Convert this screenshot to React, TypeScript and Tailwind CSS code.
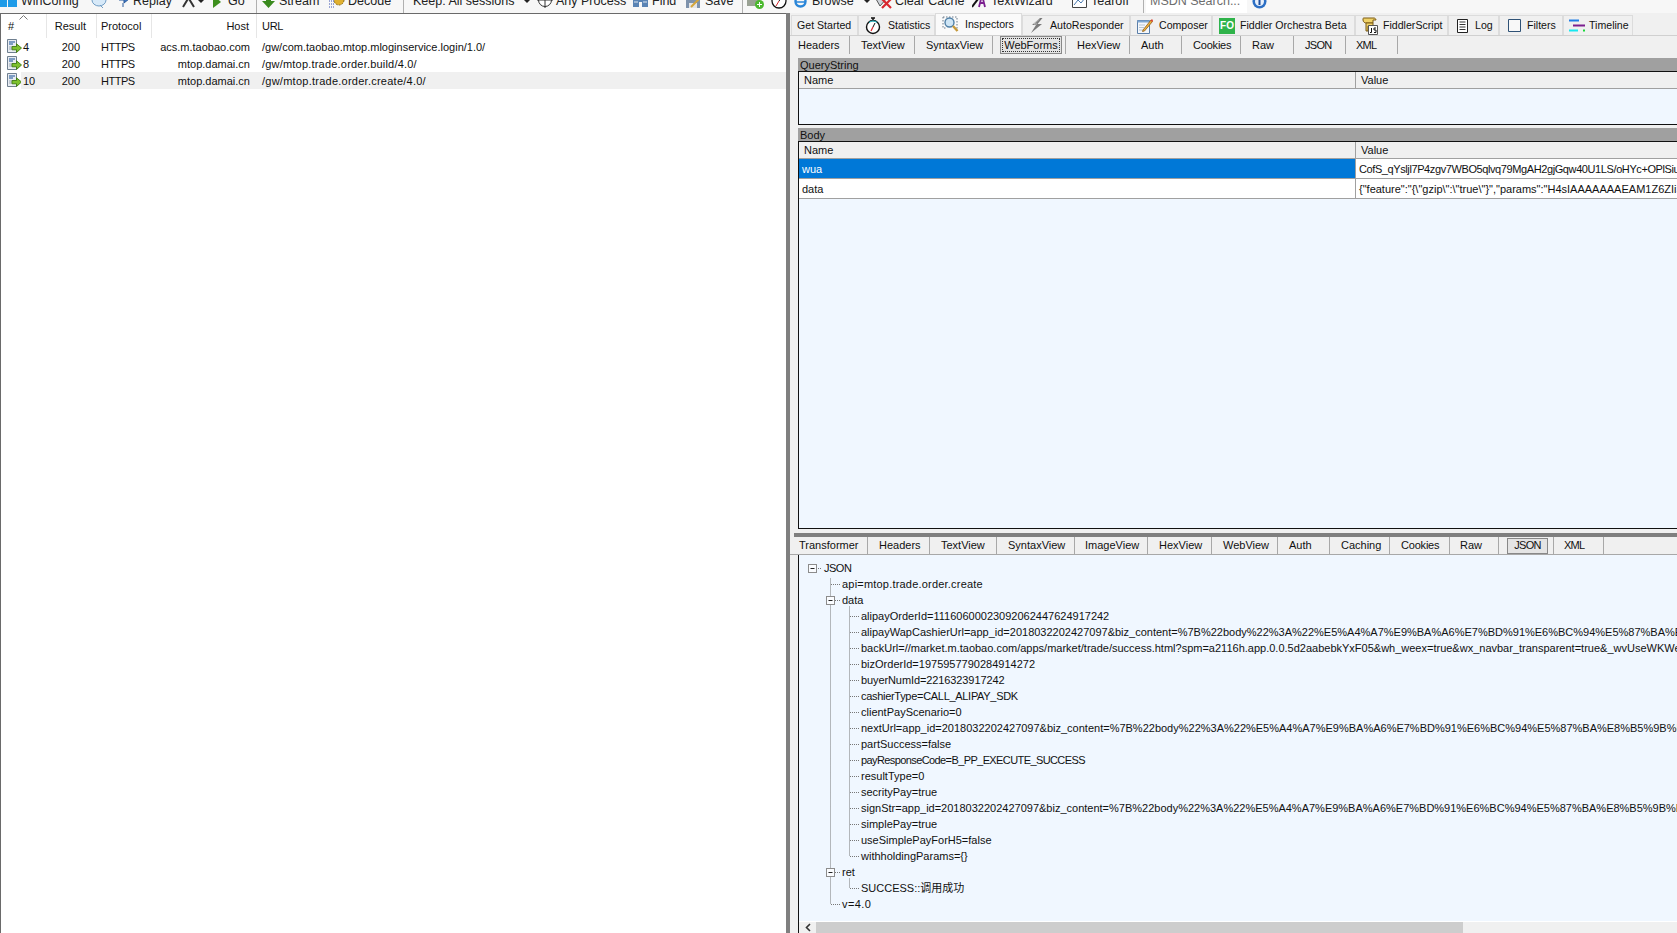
import React from "react";

const FONT = "[font-family:'Liberation_Sans','Noto_Sans_CJK_SC',sans-serif]";

function SessionIcon() {
  return (
    <svg width="15" height="15" viewBox="0 0 15 15" className="shrink-0">
      <path d="M0.5 0.5H9.5V13.5H0.5Z" fill="#e8ecf2" stroke="#6f7f8f" />
      <path d="M2 3H8M2 5H6" stroke="#5b83b5" strokeWidth="1.4" />
      <path d="M2 8H5M2 10H5" stroke="#9aa7b5" />
      <path d="M5 7.5H9.5V4.8L14.5 9L9.5 13.5V10.8H5Z" fill="#7ec22e" stroke="#3f7a12" strokeWidth="0.9" />
    </svg>
  );
}

function Stopwatch() {
  return (
    <svg width="16" height="18" viewBox="0 0 16 18">
      <path d="M6 1H10M8 1V3" stroke="#111" strokeWidth="1.4" />
      <circle cx="8" cy="10" r="6.5" fill="#fff" stroke="#111" strokeWidth="1.4" />
      <path d="M4 5.5A6 6 0 0 1 12 5.5" stroke="#28c8d8" fill="none" />
      <path d="M8 10L10 6" stroke="#111" />
      <path d="M8 10L6 14" stroke="#d8282f" strokeWidth="1.2" />
    </svg>
  );
}

function Magnifier() {
  return (
    <svg width="17" height="17" viewBox="0 0 17 17">
      <path d="M1 1H15V15" stroke="#6a7a8a" strokeDasharray="1.5 1.5" fill="none" />
      <path d="M1 1V12H5" stroke="#6a7a8a" strokeDasharray="1.5 1.5" fill="none" />
      <circle cx="7.5" cy="6.5" r="4.5" fill="#cfe6f6" stroke="#4f7fa6" strokeWidth="1.4" />
      <path d="M11 10L15.5 15" stroke="#c79a3a" strokeWidth="2.4" />
    </svg>
  );
}

function Bolt() {
  return (
    <svg width="13" height="15" viewBox="0 0 13 15">
      <path d="M10 0L2 7H6L1 15L12 6H7.5L12.5 0Z" fill="#7a7a7a" />
      <path d="M9.5 1L4 6H7" stroke="#bdbdbd" fill="none" />
    </svg>
  );
}

function ComposerIcon() {
  return (
    <svg width="16" height="16" viewBox="0 0 16 16">
      <path d="M0.5 2.5H12.5V15.5H0.5Z" fill="#f4f7fb" stroke="#5a7ea8" />
      <path d="M0.5 2.5H12.5V4.5H0.5Z" fill="#7ea7d2" />
      <path d="M2 7H8M2 9.5H7M2 12H6" stroke="#b7c4d2" />
      <path d="M6 12L14 2L15.5 3.5L7.5 13L5.5 13.5Z" fill="#f0b33a" stroke="#8a5a1a" strokeWidth="0.8" />
      <path d="M13.5 2.5L15 1L16 2.5L15 4Z" fill="#d8402f" />
    </svg>
  );
}

function ScriptIcon() {
  return (
    <svg width="16" height="18" viewBox="0 0 16 18">
      <path d="M2 1H12C13 1 14 2 14 3H11V6H4C3 6 1 5 1 3S1 1 2 1Z" fill="#f0d268" stroke="#7a5a14" />
      <path d="M4 6H11V9H6V14H4Z" fill="#f0d268" stroke="#7a5a14" />
      <path d="M6.5 8.5H15.5V17.5H6.5Z" fill="#fdfdfd" stroke="#555" />
      <path d="M9.5 11V15.5H8M14 11H12V13H14V15.5H12" stroke="#111" fill="none" />
    </svg>
  );
}

function LogIcon() {
  return (
    <svg width="11" height="14" viewBox="0 0 11 14">
      <path d="M0.5 0.5H10.5V13.5H0.5Z" fill="#fff" stroke="#222" />
      <path d="M2.5 3H8.5M2.5 5.5H8.5M2.5 8H8.5M2.5 10.5H8.5" stroke="#333" />
    </svg>
  );
}

function FilterBox() {
  return (
    <svg width="13" height="13" viewBox="0 0 13 13">
      <path d="M0.5 0.5H12.5V12.5H0.5Z" fill="#f8f8f8" stroke="#2f5276" />
    </svg>
  );
}

function TimelineIcon() {
  return (
    <svg width="17" height="13" viewBox="0 0 17 13">
      <path d="M0 1.5H10" stroke="#1e7ee6" strokeWidth="2" />
      <path d="M4 6.5H16" stroke="#7b1f8f" strokeWidth="2" />
      <path d="M0 11.5H9" stroke="#18e8f0" strokeWidth="2" />
      <path d="M14 11.5H16" stroke="#18d83a" strokeWidth="2" />
    </svg>
  );
}

const tool = "flex items-center shrink-0 whitespace-nowrap";

function Toolbar() {
  return (
    <div className="h-[13px] overflow-hidden bg-[#f7f7f7] shrink-0">
      <div className="-mt-[11px] h-6 flex items-center text-[12.5px] text-[#222]">
        <div className={tool}>
          <svg width="17" height="14" viewBox="0 0 17 14"><path d="M0 0H7V13H0ZM8 0H17V13H8Z" fill="#1e9be8" /></svg>
          <span className="ml-[4px] w-[59px]">WinConfig</span>
        </div>
        <svg width="16" height="16" viewBox="0 0 16 16" className="ml-[11px] shrink-0"><ellipse cx="8" cy="7" rx="7" ry="6" fill="#d7e9f8" stroke="#6f9cc4" /><path d="M9 12L12 15" stroke="#6f9cc4" /></svg>
        <svg width="13" height="14" viewBox="0 0 13 14" className="ml-[9px] shrink-0"><path d="M1 3H8V0L13 5L8 9V6H3M7 9V13" fill="#3f78c4" stroke="#2a5a9c" strokeWidth="1" /></svg>
        <span className={`${tool} ml-[4px] w-[38px]`}>Replay</span>
        <svg width="13" height="16" viewBox="0 0 13 16" className="ml-[11px] shrink-0"><path d="M1 14L6.5 5L12 14M3 3L6.5 5" stroke="#333" strokeWidth="2" fill="none" /></svg>
        <span className="ml-[3px] w-0 h-0 border-x-[3px] border-x-transparent border-t-[3px] border-t-[#222] shrink-0" />
        <svg width="8" height="16" viewBox="0 0 8 16" className="ml-[9px] shrink-0"><path d="M0 2L8 9L0 15Z" fill="#3d8f1e" /></svg>
        <span className={`${tool} ml-[7px] w-[17px]`}>Go</span>
        <span className="ml-[11px] w-px h-6 bg-[#b0b0b0] shrink-0" />
        <svg width="13" height="16" viewBox="0 0 13 16" className="ml-[5px] shrink-0"><path d="M4 0H9V8H13L6.5 15L0 8H4Z" fill="#3a8a1e" /></svg>
        <span className={`${tool} ml-[4px] w-[40px]`}>Stream</span>
        <svg width="16" height="16" viewBox="0 0 16 16" className="ml-[10px] shrink-0"><circle cx="10" cy="7" r="5" fill="#e0b030" stroke="#8a6a14" strokeDasharray="2 1" /><path d="M0 8H5M0 11H5M0 14H5" stroke="#3a50b0" strokeDasharray="1 1" /></svg>
        <span className={`${tool} ml-[3px] w-[45px]`}>Decode</span>
        <span className="ml-[10px] w-px h-6 bg-[#b0b0b0] shrink-0" />
        <span className={`${tool} ml-[9px] w-[103px]`}>Keep: All sessions</span>
        <span className="ml-[8px] w-0 h-0 border-x-[3px] border-x-transparent border-t-[3px] border-t-[#222] shrink-0" />
        <svg width="16" height="16" viewBox="0 0 16 16" className="ml-[7px] shrink-0"><circle cx="8" cy="7" r="6.5" fill="#fff" stroke="#333" /><path d="M0 7H16M8 0V15" stroke="#333" /></svg>
        <span className={`${tool} ml-[3px] w-[70px]`}>Any Process</span>
        <svg width="15" height="14" viewBox="0 0 15 14" className="ml-[7px] shrink-0"><path d="M0 0H6V13H0ZM9 0H15V13H9ZM6 3H9V8H6Z" fill="#5a84b5" /><path d="M1 8H5M10 8H14" stroke="#dbe6f2" /></svg>
        <span className={`${tool} ml-[4px] w-[24px]`}>Find</span>
        <svg width="15" height="15" viewBox="0 0 15 15" className="ml-[10px] shrink-0"><path d="M0 1H11L14 4V14H0Z" fill="#7f93ac" /><path d="M3 9H11V14H3Z" fill="#e5e5e5" /><path d="M5 13L14 4" stroke="#d4a53a" strokeWidth="2" /></svg>
        <span className={`${tool} ml-[4px] w-[27px]`}>Save</span>
        <span className="ml-[10px] w-px h-6 bg-[#b0b0b0] shrink-0" />
        <svg width="17" height="15" viewBox="0 0 17 15" className="ml-[4px] shrink-0"><path d="M0 1H12V12H0Z" fill="#9aa294" /><circle cx="12.5" cy="10.5" r="4.5" fill="#4bb82e" /><path d="M10 10.5H15M12.5 8V13" stroke="#fff" /></svg>
        <svg width="16" height="16" viewBox="0 0 16 16" className="ml-[7px] shrink-0"><circle cx="8" cy="8" r="7" fill="#fff" stroke="#111" strokeWidth="1.3" /><path d="M4 2.5A6.5 6.5 0 0 1 12 2.5" stroke="#28c8d8" fill="none" /><path d="M8 8L11 4" stroke="#111" /><path d="M8 8L5 13" stroke="#d8282f" /></svg>
        <svg width="15" height="15" viewBox="0 0 15 15" className="ml-[6px] shrink-0"><circle cx="7.5" cy="7.5" r="5" fill="none" stroke="#2a86d8" strokeWidth="2.4" /><path d="M3 8H12" stroke="#2a86d8" strokeWidth="1.5" /><path d="M12 2C13 0 15 0 14.5 2" stroke="#e8b020" strokeWidth="1.3" fill="none" /></svg>
        <span className={`${tool} ml-[4px] w-[42px]`}>Browse</span>
        <span className="ml-[10px] w-0 h-0 border-x-[3px] border-x-transparent border-t-[3px] border-t-[#222] shrink-0" />
        <svg width="18" height="16" viewBox="0 0 18 16" className="ml-[5px] shrink-0"><path d="M1 6L8 1L12 5L5 13Z" fill="#cfd4da" stroke="#555" /><path d="M7 6L16 15M16 6L7 15" stroke="#d8282f" strokeWidth="2.2" /></svg>
        <span className={`${tool} ml-[2px] w-[68px]`}>Clear Cache</span>
        <svg width="14" height="16" viewBox="0 0 14 16" className="ml-[9px] shrink-0"><path d="M0 14L6 6" stroke="#111" strokeWidth="2" /><path d="M7 14L10 2L13 14M8 10H12" stroke="#7b1f8f" strokeWidth="1.8" fill="none" /></svg>
        <span className={`${tool} ml-[5px] w-[66px]`}>TextWizard</span>
        <svg width="15" height="14" viewBox="0 0 15 14" className="ml-[15px] shrink-0"><path d="M0.5 1.5H14.5V13.5H0.5Z" fill="#fff" stroke="#444" /><path d="M2 11L6 6L9 9L13 4" stroke="#4a7ab0" fill="none" /></svg>
        <span className={`${tool} ml-[4px] w-[40px]`}>Tearoff</span>
        <span className="ml-[12px] w-px h-6 bg-[#b0b0b0] shrink-0" />
        <div className="ml-[2px] w-[101px] h-6 bg-white shrink-0 pl-[4px] flex items-center text-[#6d6d6d]">MSDN Search...</div>
        <svg width="15" height="15" viewBox="0 0 15 15" className="ml-[5px] shrink-0"><circle cx="7.5" cy="7.5" r="7" fill="#2c6fc4" /><circle cx="7.5" cy="7.5" r="4.5" fill="#e8f0fb" /><path d="M7.5 6V11" stroke="#1e4f9c" strokeWidth="2" /></svg>
      </div>
    </div>
  );
}

function ListHeaderCell({ className, children }: { className: string; children?: React.ReactNode }) {
  return <div className={`h-full flex items-center border-r border-[#e6e6e6] shrink-0 ${className}`}>{children}</div>;
}

const sessions = [
  { id: "4", host: "acs.m.taobao.com", url: "/gw/com.taobao.mtop.mloginservice.login/1.0/", t: "" },
  { id: "8", host: "mtop.damai.cn", url: "/gw/mtop.trade.order.build/4.0/", t: "tracking-[0.2px]" },
  { id: "10", host: "mtop.damai.cn", url: "/gw/mtop.trade.order.create/4.0/", t: "tracking-[0.25px]" },
];

function SessionList() {
  return (
    <div className="w-[786px] shrink-0 bg-white border-l border-t border-[#6a6a6a] text-[11px] text-[#111] flex flex-col">
      <div className="h-6 flex shrink-0 relative">
        <ListHeaderCell className="w-[46px] pl-[7px]">#</ListHeaderCell>
        <svg width="9" height="5" viewBox="0 0 9 5" className="absolute left-[18px] top-[1px]"><path d="M0.5 4.5L4.5 0.5L8.5 4.5" fill="none" stroke="#777" /></svg>
        <ListHeaderCell className="w-[50px] pr-[10px] justify-end">Result</ListHeaderCell>
        <ListHeaderCell className="w-[55px] pl-[4px]">Protocol</ListHeaderCell>
        <ListHeaderCell className="w-[105px] pr-[7px] justify-end">Host</ListHeaderCell>
        <div className="h-full flex items-center pl-[5px] tracking-[-0.3px]">URL</div>
      </div>
      {sessions.map((s, i) => (
        <div key={s.id} className="h-[17px] flex shrink-0">
          <div className="w-[20px] pl-[6px] flex items-center shrink-0"><SessionIcon /></div>
          <div className={`flex-1 flex items-center whitespace-nowrap pt-px ${i === 2 ? "bg-[#f0f0f0]" : ""}`}>
            <span className="w-[25px] pl-[2px] shrink-0">{s.id}</span>
            <span className="w-[34px] text-right shrink-0">200</span>
            <span className="w-[72px] pl-[21px] shrink-0 tracking-[-0.5px]">HTTPS</span>
            <span className="w-[98px] text-right shrink-0">{s.host}</span>
            <span className={`pl-[12px] ${s.t}`}>{s.url}</span>
          </div>
        </div>
      ))}
    </div>
  );
}

const topTabs = [
  { label: "Get Started", cls: "w-[67px] pl-[5px]", gap: "", icon: null },
  { label: "Statistics", cls: "w-[77px] pl-[6px]", gap: "gap-[7px]", icon: <Stopwatch /> },
  { label: "AutoResponder", cls: "w-[108px] pl-[7px]", gap: "gap-[7px]", icon: <Bolt /> },
  { label: "Composer", cls: "w-[82px] pl-[6px]", gap: "gap-[6px]", icon: <ComposerIcon /> },
  {
    label: "Fiddler Orchestra Beta",
    cls: "w-[143px] pl-[6px]",
    gap: "gap-[5px]",
    icon: <span className="w-4 h-4 bg-[#2fb34a] text-white text-[10px] font-bold flex items-center justify-center">FO</span>,
  },
  { label: "FiddlerScript", cls: "w-[93px] pl-[6px]", gap: "gap-[5px]", icon: <ScriptIcon /> },
  { label: "Log", cls: "w-[51px] pl-[8px]", gap: "gap-[7px]", icon: <LogIcon /> },
  { label: "Filters", cls: "w-[64px] pl-[8px]", gap: "gap-[6px]", icon: <FilterBox /> },
  { label: "Timeline", cls: "w-[70px] pl-[5px]", gap: "gap-[3px]", icon: <TimelineIcon /> },
];

function TopTab({ t }: { t: (typeof topTabs)[number] }) {
  return (
    <div className={`h-[20px] flex items-center border border-b-0 border-[#dcdcdc] whitespace-nowrap shrink-0 ${t.cls} ${t.gap}`}>
      {t.icon}
      <span className="pt-px">{t.label}</span>
    </div>
  );
}

function TopTabs() {
  return (
    <div className="h-[23px] shrink-0 flex items-end border-b border-[#d0d0d0] pl-[1px] text-[10.6px] text-[#111]">
      {topTabs.slice(0, 2).map((t) => <TopTab key={t.label} t={t} />)}
      <div className="h-[22px] w-[87px] pl-[6px] gap-[6px] flex items-center border border-b-0 border-[#dcdcdc] bg-[#fafafa] whitespace-nowrap shrink-0 pb-[1px]">
        <Magnifier />
        <span className="pt-px">Inspectors</span>
      </div>
      {topTabs.slice(2).map((t) => <TopTab key={t.label} t={t} />)}
    </div>
  );
}

const reqTabs = [
  { l: "Headers", c: "w-[60px] pl-[8px]" },
  { l: "TextView", c: "w-[65px] pl-[11px]" },
  { l: "SyntaxView", c: "w-[78px] pl-[11px]" },
  { l: "WebForms", c: "w-[73px]", active: true },
  { l: "HexView", c: "w-[64px] pl-[11px]" },
  { l: "Auth", c: "w-[52px] pl-[11px]" },
  { l: "Cookies", c: "w-[59px] pl-[11px] tracking-[-0.2px]" },
  { l: "Raw", c: "w-[53px] pl-[11px]" },
  { l: "JSON", c: "w-[52px] pl-[11px] tracking-[-0.7px]" },
  { l: "XML", c: "w-[52px] pl-[10px] tracking-[-0.8px]" },
];

function ActiveTab({ label }: { label: string }) {
  return (
    <div className="ml-[7px] h-[18px] flex items-center justify-center bg-[#e4e4e4] border-[1.5px] border-[#888] outline-1 -outline-offset-[3px] outline-dotted outline-[#333] w-[62px]">
      <span className="pt-px">{label}</span>
    </div>
  );
}

function ReqTabs() {
  return (
    <div className="h-[22px] shrink-0 flex items-start text-[11px] text-[#111]">
      {reqTabs.map((t) => (
        <div key={t.l} className={`h-[18px] flex items-center border-r border-[#a8a8a8] whitespace-nowrap shrink-0 ${t.c}`}>
          {t.active ? <ActiveTab label={t.l} /> : t.l}
        </div>
      ))}
    </div>
  );
}

function ColumnHeader() {
  return (
    <div className="h-[17px] flex items-center bg-[#f0f0f0] border-b border-[#a0a0a0] shrink-0">
      <div className="w-[557px] pl-[5px] pt-px border-r border-[#a0a0a0] h-full flex items-center shrink-0">Name</div>
      <div className="pl-[5px] pt-px">Value</div>
    </div>
  );
}

function WebForms() {
  return (
    <div className="h-[471px] shrink-0 flex flex-col pl-[8px] text-[11px] text-[#111]">
      <div className="h-[13px] bg-[#a0a0a0] pl-[2px] pt-[2px] flex items-center shrink-0">QueryString</div>
      <div className="h-[54px] border-y border-l border-[#111] bg-[#f0f7ff] flex flex-col shrink-0">
        <ColumnHeader />
      </div>
      <div className="h-[3px] shrink-0" />
      <div className="h-[13px] bg-[#a0a0a0] pl-[2px] pt-[2px] flex items-center shrink-0">Body</div>
      <div className="flex-1 min-h-0 border-y border-l border-[#111] bg-[#f0f7ff] flex flex-col overflow-hidden">
        <ColumnHeader />
        <div className="h-5 flex border-b border-[#a0a0a0] shrink-0 whitespace-nowrap bg-white">
          <div className="w-[557px] bg-[#0078d7] text-white pl-[3px] pt-px flex items-center border-r border-[#a0a0a0] shrink-0">wua</div>
          <div className="pl-[3px] pt-px flex items-center tracking-[-0.4px]">CofS_qYsljl7P4zgv7WBO5qlvq79MgAH2gjGqw40U1LS/oHYc+OPlSiuQ</div>
        </div>
        <div className="h-5 flex border-b border-[#a0a0a0] shrink-0 whitespace-nowrap bg-white">
          <div className="w-[557px] pl-[3px] pt-px flex items-center border-r border-[#a0a0a0] shrink-0">data</div>
          <div className="pl-[3px] pt-px flex items-center">{'{"feature":"{\\"gzip\\":\\"true\\"}","params":"H4sIAAAAAAAEAM1Z6ZIiSZ'}</div>
        </div>
      </div>
    </div>
  );
}

const resTabs = [
  { l: "Transformer", c: "w-[78px] pl-[9px]" },
  { l: "Headers", c: "w-[62px] pl-[11px]" },
  { l: "TextView", c: "w-[67px] pl-[11px]" },
  { l: "SyntaxView", c: "w-[78px] pl-[11px]" },
  { l: "ImageView", c: "w-[73px] pl-[10px]" },
  { l: "HexView", c: "w-[64px] pl-[11px]" },
  { l: "WebView", c: "w-[66px] pl-[11px]" },
  { l: "Auth", c: "w-[52px] pl-[11px]" },
  { l: "Caching", c: "w-[60px] pl-[11px]" },
  { l: "Cookies", c: "w-[60px] pl-[11px] tracking-[-0.2px]" },
  { l: "Raw", c: "w-[49px] pl-[10px]" },
  { l: "JSON", c: "w-[55px] pl-[8px] tracking-[-0.7px]", active: true },
  { l: "XML", c: "w-[50px] pl-[10px] tracking-[-0.8px]" },
];

function ResTabs() {
  return (
    <div className="h-[18px] shrink-0 flex items-start text-[11px] text-[#111] border-b border-[#a8a8a8]">
      {resTabs.map((t) => (
        <div key={t.l} className={`h-[17px] flex items-center border-r border-[#a8a8a8] whitespace-nowrap shrink-0 ${t.c}`}>
          {t.active ? (
            <div className="w-[41px] h-[16px] flex items-center justify-center bg-[#e4e4e4] border-[1.5px] border-[#888]">{t.l}</div>
          ) : (
            t.l
          )}
        </div>
      ))}
    </div>
  );
}

const enc = "%7B%22body%22%3A%22%E5%A4%A7%E9%BA%A6%E7%BD%91%E6%BC%94%E5%87%BA%E8%B5%9B%E4%BA%8B%22%2C%22subject%22";
const tree: [number, string, string][] = [
  [1, "JSON", "tracking-[-0.5px]"],
  [2, "api=mtop.trade.order.create", "tracking-[0.2px]"],
  [2, "data", ""],
  [3, "alipayOrderId=11160600023092062447624917242", ""],
  [3, `alipayWapCashierUrl=app_id=2018032202427097&biz_content=${enc}`, ""],
  [3, "backUrl=//market.m.taobao.com/apps/market/trade/success.html?spm=a2116h.app.0.0.5d2aabebkYxF05&wh_weex=true&wx_navbar_transparent=true&_wvUseWKWebView=YES", ""],
  [3, "bizOrderId=1975957790284914272", ""],
  [3, "buyerNumId=2216323917242", "tracking-[-0.1px]"],
  [3, "cashierType=CALL_ALIPAY_SDK", "tracking-[-0.3px]"],
  [3, "clientPayScenario=0", ""],
  [3, `nextUrl=app_id=2018032202427097&biz_content=${enc}`, ""],
  [3, "partSuccess=false", ""],
  [3, "payResponseCode=B_PP_EXECUTE_SUCCESS", "tracking-[-0.6px]"],
  [3, "resultType=0", ""],
  [3, "secrityPay=true", ""],
  [3, `signStr=app_id=2018032202427097&biz_content=${enc}`, ""],
  [3, "simplePay=true", ""],
  [3, "useSimplePayForH5=false", ""],
  [3, "withholdingParams={}", ""],
  [2, "ret", ""],
  [3, "SUCCESS::调用成功", ""],
  [2, "v=4.0", "tracking-[0.4px]"],
];

function TreeBox({ x, y }: { x: number; y: number }) {
  return (
    <g>
      <rect x={x - 4} y={y - 4} width="8" height="8" fill="#fafcff" stroke="#8c8c8c" />
      <path d={`M${x - 2} ${y}H${x + 2}`} stroke="#222" />
    </g>
  );
}

function TreeGuides() {
  const rowY = (i: number) => 13.5 + 16 * i;
  const lines: string[] = [];
  lines.push(`M32.5 ${rowY(1) - 6}V${rowY(21)}`);
  lines.push(`M51.5 ${rowY(2) + 6}V${rowY(18)}`);
  lines.push(`M51.5 ${rowY(19) + 6}V${rowY(20)}`);
  lines.push(`M18 ${rowY(0)}H23`);
  lines.push(`M37 ${rowY(2)}H42`, `M37 ${rowY(19)}H42`);
  lines.push(`M33 ${rowY(1)}H42`, `M33 ${rowY(21)}H42`);
  for (let i = 3; i <= 18; i++) lines.push(`M52 ${rowY(i)}H61`);
  lines.push(`M52 ${rowY(20)}H61`);
  return (
    <svg width="70" height="366" viewBox="0 0 70 366" className="absolute -left-px top-0 pointer-events-none">
      <path d={lines.join("")} stroke="#777" strokeDasharray="1 1" fill="none" />
      <TreeBox x={14.5} y={rowY(0)} />
      <TreeBox x={32.5} y={rowY(2)} />
      <TreeBox x={32.5} y={rowY(19)} />
    </svg>
  );
}

function JsonTree() {
  const indent: Record<number, string> = { 1: "pl-[25px]", 2: "pl-[43px]", 3: "pl-[62px]" };
  return (
    <div className="relative flex-1 min-h-0 bg-[#f0f7ff] pt-[5px] overflow-hidden text-[11px] text-[#111]">
      <TreeGuides />
      {tree.map(([lvl, text, t], i) => (
        <div key={i} className={`h-4 flex items-center whitespace-nowrap ${indent[lvl]} ${t}`}>{text}</div>
      ))}
    </div>
  );
}

function Scrollbar() {
  return (
    <div className="h-[11px] mt-px flex shrink-0 bg-[#f0f0f0]">
      <div className="w-[17px] flex items-center justify-center shrink-0">
        <svg width="6" height="9" viewBox="0 0 6 9"><path d="M5 1L1.5 4.5L5 8" fill="none" stroke="#333" strokeWidth="1.6" /></svg>
      </div>
      <div className="w-[647px] bg-[#cdcdcd] shrink-0" />
    </div>
  );
}

function Inspectors() {
  return (
    <div className="flex-1 min-w-0 flex flex-col overflow-hidden">
      <TopTabs />
      <ReqTabs />
      <WebForms />
      <div className="h-1 shrink-0" />
      <div className="h-[4px] ml-[4px] bg-[#7f7f7f] shrink-0" />
      <ResTabs />
      <div className="ml-[8px] flex-1 min-h-0 border-l border-[#111] flex flex-col bg-white">
        <JsonTree />
        <Scrollbar />
      </div>
    </div>
  );
}

export default function App() {
  return (
    <div className={`w-[1677px] h-[933px] overflow-hidden flex flex-col bg-[#f0f0f0] ${FONT}`}>
      <Toolbar />
      <div className="flex-1 min-h-0 flex">
        <SessionList />
        <div className="w-1 shrink-0 bg-[#7f7f7f]" />
        <Inspectors />
      </div>
    </div>
  );
}
